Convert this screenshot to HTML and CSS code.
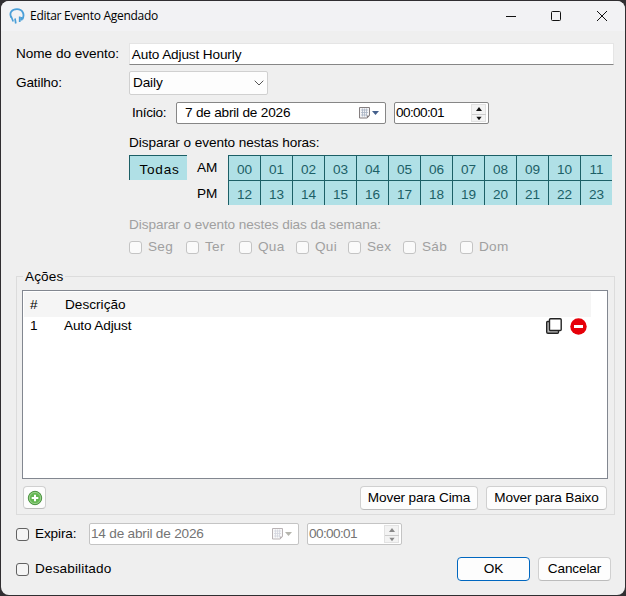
FILE: index.html
```html
<!DOCTYPE html>
<html lang="pt-BR">
<head>
    <meta charset="UTF-8">
    <meta name="viewport" content="width=device-width, initial-scale=1.0">
    <title>Editar Evento Agendado</title>
    <link rel="stylesheet" href="styles.css">
</head>
<body>
    <div class="window">
        <div class="titlebar">
            <svg class="logo" width="16" height="17" viewBox="0 0 16 17" fill="none" stroke="#4a9fd8">
                <path d="M2.300 9.500C-.2 4.500 3 1.200 8 1.200C13.500 1.200 16.300 6.500 13.200 11.500" stroke-width="1.800"/>
                <path d="M2.200 8.500l2 5M6 10.500l.800 5M10.700 8.500v5.500M12.500 9v3.500" stroke-width="1.700"/>
            </svg>
            <span class="title">Editar Evento Agendado</span>
            <svg class="controls" width="104" height="12" viewBox="0 0 104 12" fill="none" stroke="#111">
                <path d="M0 6.500h10"/>
                <rect x="45.500" y="1.500" width="9" height="9" rx="1"/>
                <path d="M91 1l10 10M101 1l-10 10"/>
            </svg>
        </div>

        <div class="content">
            <div class="row name-row">
                <span class="label name-label">Nome do evento:</span>
                <div class="textbox">Auto Adjust Hourly</div>
            </div>
            <div class="row trigger-row">
                <span class="label">Gatilho:</span>
                <div class="combo">
                    <span>Daily</span>
                    <svg width="10" height="6" viewBox="0 0 10 6" fill="none" stroke="#555"><path d="M.7.700l4.300 4.300L9.300.700"/></svg>
                </div>
            </div>

            <div class="schedule">
                <div class="row start-row">
                    <span class="start-label">Início:</span>
                    <div class="date">
                        <span class="start-date">7 de abril de 2026</span>
                        <svg width="22" height="14" viewBox="0 0 22 14">
                            <path d="M1.500 1.500h10v8l-2.500 2.500h-7.500z" fill="#f4f4f6" stroke="#857f80"/>
                            <path d="M3 4h7M3 6.500h7M3 9h6M4.500 2.500v8M6.500 2.500v8M8.500 2.500v8" stroke="#a9b4c4" stroke-width=".8"/>
                            <path d="M9 12.500v-3h3z" fill="#857f80"/>
                            <path d="M14 5h7l-3.500 4z" fill="#44608c"/>
                        </svg>
                    </div>
                    <div class="time">
                        <span>00:00:01</span>
                        <div class="spinner">
                            <svg width="14" height="8" viewBox="0 0 14 8"><path d="M4 6h6l-3-4z" fill="#111"/></svg>
                            <svg width="14" height="8" viewBox="0 0 14 8"><path d="M4 2h6l-3 4z" fill="#111"/></svg>
                        </div>
                    </div>
                </div>

                <div class="hours-label">Disparar o evento nestas horas:</div>
                <div class="hours">
                    <div class="all">Todas</div>
                    <div class="periods">
                        <span>AM</span>
                        <span>PM</span>
                    </div>
                    <div class="hour-grid">
                        <span>00</span><span>01</span><span>02</span><span>03</span><span>04</span><span>05</span>
                        <span>06</span><span>07</span><span>08</span><span>09</span><span>10</span><span>11</span>
                        <span>12</span><span>13</span><span>14</span><span>15</span><span>16</span><span>17</span>
                        <span>18</span><span>19</span><span>20</span><span>21</span><span>22</span><span>23</span>
                    </div>
                </div>

                <div class="days-label">Disparar o evento nestes dias da semana:</div>
                <div class="days">
                    <label class="seg"><i class="check"></i>Seg</label>
                    <label class="ter"><i class="check"></i>Ter</label>
                    <label class="qua"><i class="check"></i>Qua</label>
                    <label class="qui"><i class="check"></i>Qui</label>
                    <label class="sex"><i class="check"></i>Sex</label>
                    <label class="sab"><i class="check"></i>Sáb</label>
                    <label class="dom"><i class="check"></i>Dom</label>
                </div>
            </div>

            <div class="group">
                <div class="legend"><span>Ações</span></div>
                <div class="list">
                    <div class="list-head">
                        <span class="num">#</span>
                        <span class="head-desc">Descrição</span>
                    </div>
                    <div class="list-row">
                        <span class="num">1</span>
                        <span class="desc">Auto Adjust</span>
                        <svg width="16" height="16" viewBox="0 0 16 16" fill="#fff" stroke="#222" stroke-width="1.400">
                            <path d="M3.200 3.500H1.500Q.700 3.500.700 4.500V14Q.700 15.200 2 15.200h9.500q1 0 1-1v-1.500" fill="#bbb"/>
                            <rect x="3.500" y=".800" width="11.700" height="11.700" rx="1"/>
                        </svg>
                        <svg class="remove" width="17" height="17" viewBox="0 0 17 17">
                            <circle cx="8.500" cy="8.500" r="8.200" fill="#e60009"/>
                            <rect x="4" y="7" width="9" height="3" fill="#fff"/>
                        </svg>
                    </div>
                </div>
                <div class="row group-buttons">
                    <div class="button add">
                        <svg width="16" height="16" viewBox="0 0 16 16">
                            <circle cx="8" cy="8" r="6.700" fill="#65b653" stroke="#4c9142"/>
                            <circle cx="8" cy="8" r="5.600" fill="none" stroke="#a7d99a" stroke-width=".8"/>
                            <path d="M8 4.700v6.600M4.700 8h6.600" stroke="#fff" stroke-width="2"/>
                        </svg>
                    </div>
                    <div class="button up">Mover para Cima</div>
                    <div class="button down">Mover para Baixo</div>
                </div>
            </div>

            <div class="row expire-row">
                <i class="check"></i>
                <span class="expire-label">Expira:</span>
                <div class="date disabled">
                    <span class="end-date">14 de abril de 2026</span>
                    <svg width="22" height="14" viewBox="0 0 22 14">
                        <path d="M1.500 1.500h10v8l-2.500 2.500h-7.500z" fill="#f8f8f9" stroke="#b9b3b5"/>
                        <path d="M3 4h7M3 6.500h7M3 9h6M4.500 2.500v8M6.500 2.500v8M8.500 2.500v8" stroke="#d3d6de" stroke-width=".8"/>
                        <path d="M9 12.500v-3h3z" fill="#b9b3b5"/>
                        <path d="M14 5h7l-3.500 4z" fill="#b5b5ad"/>
                    </svg>
                </div>
                <div class="time disabled">
                    <span>00:00:01</span>
                    <div class="spinner">
                        <svg width="14" height="8" viewBox="0 0 14 8"><path d="M4 6h6l-3-4z" fill="#888"/></svg>
                        <svg width="14" height="8" viewBox="0 0 14 8"><path d="M4 2h6l-3 4z" fill="#888"/></svg>
                    </div>
                </div>
            </div>

            <div class="row footer">
                <i class="check"></i>
                <span class="disable-label">Desabilitado</span>
                <div class="button ok">OK</div>
                <div class="button cancel">Cancelar</div>
            </div>
        </div>
    </div>
</body>
</html>
```
FILE: styles.css
```css
* {
    box-sizing: border-box;
}

body {
    margin: 0;
    height: 596px;
    padding: 1px;
    background: #302e31;
    font: 13.6px/16px "Liberation Sans", Arial, sans-serif;
    letter-spacing: -0.13px;
    color: #000;
    overflow: hidden;
}

svg {
    display: block;
    flex: none;
}

span {
    white-space: nowrap;
}

.window {
    height: 594px;
    background: #efefef;
    border-radius: 8px;
    overflow: hidden;
}

.titlebar {
    height: 30px;
    display: flex;
    align-items: center;
    padding: 0 15px 0 8px;
    background: #f2f2f4;
}

.title {
    margin-left: 5px;
    font: 12px/16px "Open Sans", sans-serif;
    letter-spacing: -0.28px;
}

.controls {
    margin-left: auto;
}

.content {
    padding: 12px 11px 0 15px;
}

.row {
    display: flex;
    align-items: center;
}

.label {
    width: 113px;
}

.name-row {
    height: 22px;
}

.name-label {
    letter-spacing: -0.03px;
}

.textbox {
    width: 486px;
    height: 22px;
    padding: 3px 2px;
    background: #fff;
    border: 1px solid #e5e5e5;
    border-bottom-color: #868686;
}

.trigger-row {
    height: 24px;
    margin-top: 6px;
}

.combo {
    width: 139px;
    height: 24px;
    display: flex;
    align-items: center;
    justify-content: space-between;
    padding: 0 3px;
    background: #fdfdfd;
    border: 1px solid #d0d0d0;
    border-radius: 2px;
}

.schedule {
    margin-left: 113px;
}

.start-row {
    margin-top: 7px;
    height: 22px;
}

.start-label {
    width: 44px;
    margin-left: 3px;
    letter-spacing: -0.3px;
}

.date, .time {
    height: 22px;
    display: flex;
    align-items: center;
    background: #fff;
    border: 1px solid #868686;
    border-radius: 2px;
}

.date {
    width: 210px;
    justify-content: space-between;
    padding: 0 5px 0 1px;
    letter-spacing: -0.2px;
}

.start-date {
    margin-left: 7px;
}

.time {
    width: 95px;
    margin-left: 8px;
    padding: 0 2px 0 1px;
    justify-content: space-between;
}

.time span {
    letter-spacing: -0.62px;
}

.spinner {
    width: 15px;
    height: 18px;
    display: grid;
    grid-template-rows: 9px 9px;
    background: #f3f3f3;
    border: 1px solid #e2e2e2;
}

.spinner svg + svg {
    border-top: 1px solid #ccc;
}

.date.disabled, .time.disabled {
    color: #747474;
    border-color: #c4c4c4;
}

.hours-label, .days-label {
    height: 16px;
    letter-spacing: -0.07px;
}

.hours-label {
    margin-top: 11px;
}

.hours {
    display: flex;
    margin-top: 4px;
    height: 50px;
}

.all, .hour-grid span {
    height: 25px;
    background: #b0e0e6;
    border: solid #1c5f66;
    border-width: 1px 0 0 1px;
    text-align: center;
    line-height: 27px;
}

.all {
    width: 58px;
    letter-spacing: 0.7px;
    padding-left: 2px;
}

.periods {
    width: 41px;
    padding-left: 10px;
    display: grid;
    line-height: 26px;
}

.hour-grid {
    display: grid;
    grid-template-columns: repeat(12, 32px);
    color: #1c5f66;
}

.days-label, .days {
    color: #a0a0a0;
}

.days-label {
    margin-top: 12px;
}

.days {
    display: flex;
    margin-top: 6px;
    letter-spacing: 0.3px;
}

.days label {
    display: flex;
    align-items: center;
    gap: 6px;
}

.seg, .qua {
    width: 57px;
}

.ter {
    width: 53px;
}

.qui {
    width: 52px;
}

.sex {
    width: 55px;
}

.sab {
    width: 57px;
}

.check {
    width: 13px;
    height: 13px;
    flex: none;
    background: #f5f5f5;
    border: 1px solid #626262;
    border-radius: 3px;
}

.days .check {
    background: #fafafa;
    border-color: #c4c4c4;
}

.group {
    width: 599px;
    height: 239px;
    margin-top: 21px;
    padding: 0 6px;
    border: 1px solid #dcdcdc;
}

.legend {
    height: 13px;
    margin-top: -8px;
    margin-bottom: 8px;
    letter-spacing: 0.1px;
}

.legend span {
    padding: 0 2px;
    background: #efefef;
}

.list {
    width: 586px;
    height: 189px;
    margin-left: -1px;
    padding: 1px;
    background: #fff;
    border: 1px solid #828790;
}

.list-head {
    width: 567px;
    height: 25px;
    display: flex;
    align-items: center;
    padding-left: 6px;
    background: #f5f5f5;
}

.head-desc {
    letter-spacing: 0.02px;
    margin-left: 1px;
}

.list-row {
    display: flex;
    align-items: center;
    padding-left: 6px;
    height: 18px;
}

.num {
    width: 34px;
}

.desc {
    width: 482px;
}

.remove {
    margin-left: 8px;
}

.group-buttons {
    margin-top: 6px;
    height: 25px;
    padding-right: 1px;
}

.button {
    height: 24px;
    display: flex;
    align-items: center;
    justify-content: center;
    background: #fdfdfd;
    border: 1px solid #d0d0d0;
    border-bottom-color: #bcbcbc;
    border-radius: 4px;
}

.add {
    width: 23px;
    height: 23px;
}

.up {
    width: 118px;
    margin-left: auto;
}

.down {
    width: 121px;
    margin-left: 8px;
}

.expire-row {
    height: 22px;
    margin-top: 8px;
}

.expire-label {
    width: 54px;
    margin-left: 6px;
}

.footer {
    margin-top: 12px;
    height: 24px;
}

.disable-label {
    margin-left: 6px;
    letter-spacing: 0.13px;
}

.ok {
    width: 73px;
    margin-left: auto;
    border-color: #0067c0;
}

.cancel {
    width: 73px;
    margin-left: 8px;
    margin-right: 3px;
}
```
